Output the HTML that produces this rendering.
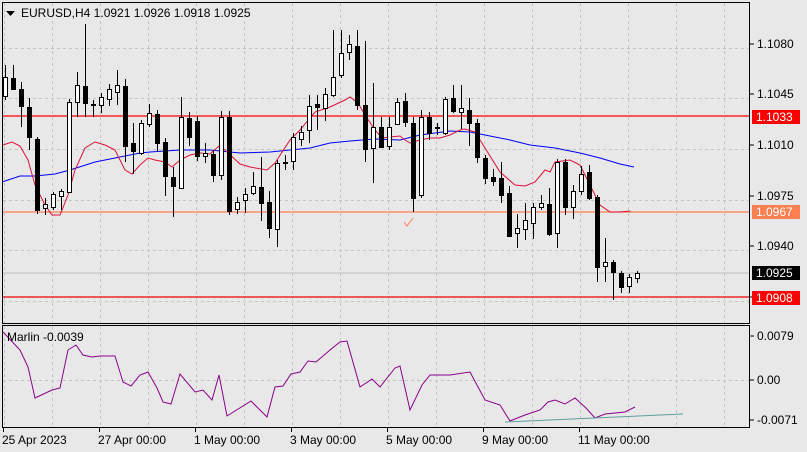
<!DOCTYPE html>
<html><head><meta charset="utf-8"><style>
body{margin:0;background:#e8e8e8;width:807px;height:452px;overflow:hidden;font-family:"Liberation Sans",sans-serif}
svg{display:block}
text{font-family:"Liberation Sans",sans-serif;font-size:12px;fill:#000}
</style></head><body>
<svg id="s" width="807" height="452" xmlns="http://www.w3.org/2000/svg">
<rect width="807" height="452" fill="#e8e8e8"/>
<g id="grid" stroke="#c4c4c4" stroke-dasharray="3,3" stroke-width="1"></g>
<line x1="2" y1="116" x2="750" y2="116" stroke="#f00" stroke-width="1.2"/>
<line x1="2" y1="212" x2="750" y2="212" stroke="#ff7f50" stroke-width="1.2"/>
<line x1="2" y1="273" x2="750" y2="273" stroke="#bbb" stroke-width="1"/>
<line x1="2" y1="297" x2="750" y2="297" stroke="#e00" stroke-width="1.2"/>
<polyline fill="none" stroke="#0000ff" stroke-width="1" points="2,182 20,176 35,176 55,174 70,170 95,162 115,158 140,153 150,152 180,150 210,150 240,153 270,152 290,150 310,148 330,143 350,141 375,139 400,140 420,135 450,131 470,132 490,136 510,140 530,145 555,148 580,153 600,158 620,164 634,167"/>
<polyline fill="none" stroke="#e0103a" stroke-width="1" points="3,145 12,142 20,146 28,160 35,185 45,205 52,215 60,215 68,195 75,170 85,148 95,142 105,145 115,150 125,170 132,174 140,165 148,158 155,160 165,162 172,167 180,160 190,155 200,153 210,154 219,146 225,150 240,164 250,167 267,170 275,163 290,140 300,130 315,112 330,107 345,100 350,97 358,103 365,115 375,130 382,138 390,137 400,136 405,140 410,143 420,140 430,138 440,138 450,135 460,130 465,129 475,132 485,148 500,172 515,185 525,186 535,182 545,170 550,172 555,162 570,160 580,165 590,185 600,205 610,212 620,212 630,211"/>
<g id="c"></g>
<path d="M404,222 l3,4 l6,-8" fill="none" stroke="#ff7f50" stroke-width="1"/>
<polyline fill="none" stroke="#8b008b" stroke-width="1" points="3,332 20,350 28,367 35,398 52,390 60,388 68,350 76,345 83,355 92,357 100,356 115,356 123,382 131,386 140,375 148,372 157,388 163,402 171,404 180,374 195,392 203,390 212,400 219,375 227,416 251,401 267,417 275,387 283,386 291,374 300,372 308,361 316,362 330,350 340,342 347,341 360,387 372,379 380,387 395,368 400,366 410,410 422,385 430,375 450,375 470,372 485,400 500,405 510,421 525,415 540,410 548,402 555,400 565,404 575,398 586,408 595,418 605,414 615,413 625,412 635,407"/>
<line x1="505" y1="422" x2="683" y2="414" stroke="#5f9ea0" stroke-width="1"/>
<rect x="2.5" y="2.5" width="747" height="321" fill="none" stroke="#000"/>
<rect x="2.5" y="325.5" width="747" height="102" fill="none" stroke="#000"/>
<path d="M6,11 h9 l-4.5,5z" fill="#000"/>
<text x="21" y="17">EURUSD,H4  1.0921 1.0926 1.0918 1.0925</text>
<text x="7" y="341">Marlin -0.0039</text>
<g id="ax"></g>
<rect x="752" y="110" width="48" height="14" fill="#f00"/><text x="756" y="121" style="fill:#fff">1.1033</text>
<rect x="752" y="205" width="48" height="14" fill="#ff7f50"/><text x="756" y="216" style="fill:#fff">1.0967</text>
<rect x="752" y="266" width="48" height="14" fill="#000"/><text x="756" y="277" style="fill:#fff">1.0925</text>
<rect x="752" y="291" width="48" height="14" fill="#f00"/><text x="756" y="302" style="fill:#fff">1.0908</text>
</svg>
<script>
var ns="http://www.w3.org/2000/svg";
function el(p,t,a,txt){var e=document.createElementNS(ns,t);for(var k in a)e.setAttribute(k,a[k]);if(txt)e.textContent=txt;document.getElementById(p).appendChild(e);return e;}
for(var x=4;x<750;x+=48){el('grid','line',{x1:x+.5,y1:3,x2:x+.5,y2:323});el('grid','line',{x1:x+.5,y1:326,x2:x+.5,y2:427});}
[48,98,149,200,250,301].forEach(function(y){el('grid','line',{x1:3,y1:y+.5,x2:749,y2:y+.5});});
el('grid','line',{x1:3,y1:380.5,x2:749,y2:380.5});
[["1.1080",48],["1.1045",98],["1.1010",149],["1.0975",200],["1.0940",250],["1.0905",301],["0.0079",340],["0.00",384],["-0.0071",424]].forEach(function(a){el('ax','line',{x1:750,y1:a[1]-4,x2:754,y2:a[1]-4,stroke:'#000'});el('ax','text',{x:757,y:a[1]},a[0]);});
[["25 Apr 2023",2],["27 Apr 00:00",98],["1 May 00:00",194],["3 May 00:00",290],["5 May 00:00",386],["9 May 00:00",482],["11 May 00:00",578]].forEach(function(a){el('ax','text',{x:a[1],y:444},a[0]);el('ax','line',{x1:a[1]+1.5,y1:428,x2:a[1]+1.5,y2:432,stroke:'#000'});});
// [bodyTop, bodyBottom, wickTop, wickBottom, white]
var D=[[77,96,65,100,1],[78,89,65,90,0],[89,106,82,127,0],[107,137,98,150,0],[139,210,137,214,0],[204,208,198,215,1],[194,207,192,210,1],[191,196,189,210,1],[102,192,99,193,1],[85,102,72,117,1],[86,103,24,117,0],[104,105,100,117,1],[97,105,93,113,1],[89,99,84,106,1],[85,92,70,105,1],[86,146,79,162,0],[143,151,123,174,0],[123,153,120,155,1],[113,124,104,127,1],[114,143,110,152,0],[142,176,138,196,0],[177,186,167,217,0],[117,188,97,189,1],[118,137,112,146,0],[121,156,116,161,0],[153,156,143,163,1],[154,175,150,182,0],[117,175,111,180,1],[117,211,111,215,0],[202,209,197,214,1],[194,200,188,213,1],[186,193,172,195,1],[187,203,157,221,0],[202,228,191,238,0],[163,229,160,247,1],[162,163,155,170,1],[137,161,133,170,1],[132,139,126,146,1],[106,130,95,143,1],[104,107,95,130,0],[94,108,88,121,1],[77,95,30,97,1],[53,75,30,78,1],[44,52,35,60,1],[46,105,30,110,0],[105,149,41,162,0],[127,148,83,183,1],[127,147,117,148,0],[127,146,117,150,1],[102,124,98,125,1],[101,122,93,127,0],[123,198,117,212,0],[117,195,110,198,1],[117,133,112,140,0],[127,128,123,135,1],[99,133,97,135,1],[98,111,85,113,0],[108,112,85,129,1],[110,123,98,146,0],[123,157,119,163,0],[158,178,155,184,0],[177,181,169,186,0],[178,195,162,203,0],[193,236,186,237,0],[228,233,214,248,1],[220,229,203,240,1],[207,223,203,239,1],[203,207,195,210,1],[204,234,188,236,0],[162,233,159,248,1],[162,207,159,215,0],[191,207,185,219,1],[174,191,166,195,1],[172,198,165,200,0],[197,267,195,282,0],[262,266,238,282,1],[262,272,260,300,0],[273,287,271,293,0],[277,286,274,293,1],[273,278,271,283,1]];
for(var i=0;i<D.length;i++){var d=D[i],x=3+i*8;
el('c','line',{x1:x+2.5,y1:d[2],x2:x+2.5,y2:d[3],stroke:'#000'});
el('c','rect',{x:x+0.5,y:d[0]+0.5,width:4,height:Math.max(d[1]-d[0],1),fill:d[4]?'#fff':'#000',stroke:'#000','stroke-width':1});}
</script>
</body></html>
